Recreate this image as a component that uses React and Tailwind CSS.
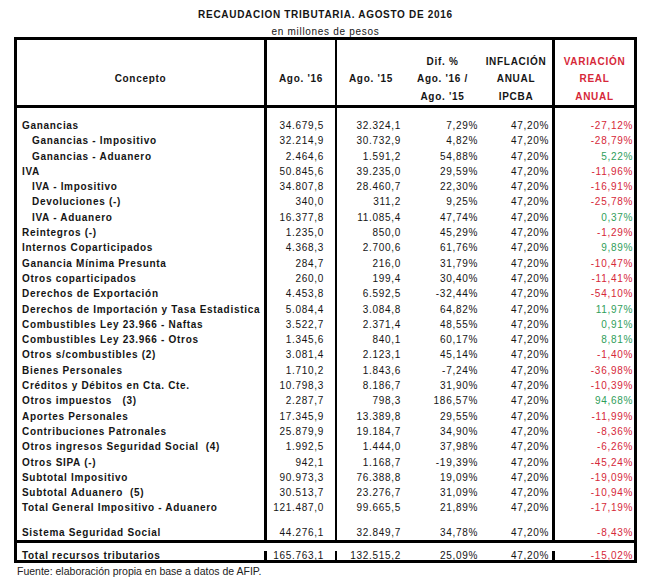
const gridCl = 'grid grid-cols-[250px_70px_68px_75px_75px_79px]';
const red = 'text-[#d62839]';
const green = 'text-[#2f9e5a]';

const rows = [
  { label: 'Ganancias', a: '34.679,5', b: '32.324,1', dif: '7,29%', real: '-27,12%' },
  { label: 'Ganancias - Impositivo', a: '32.214,9', b: '30.732,9', dif: '4,82%', real: '-28,79%', indent: true },
  { label: 'Ganancias - Aduanero', a: '2.464,6', b: '1.591,2', dif: '54,88%', real: '5,22%', indent: true },
  { label: 'IVA', a: '50.845,6', b: '39.235,0', dif: '29,59%', real: '-11,96%' },
  { label: 'IVA - Impositivo', a: '34.807,8', b: '28.460,7', dif: '22,30%', real: '-16,91%', indent: true },
  { label: 'Devoluciones (-)', a: '340,0', b: '311,2', dif: '9,25%', real: '-25,78%', indent: true },
  { label: 'IVA - Aduanero', a: '16.377,8', b: '11.085,4', dif: '47,74%', real: '0,37%', indent: true },
  { label: 'Reintegros (-)', a: '1.235,0', b: '850,0', dif: '45,29%', real: '-1,29%' },
  { label: 'Internos Coparticipados', a: '4.368,3', b: '2.700,6', dif: '61,76%', real: '9,89%' },
  { label: 'Ganancia Mínima Presunta', a: '284,7', b: '216,0', dif: '31,79%', real: '-10,47%' },
  { label: 'Otros coparticipados', a: '260,0', b: '199,4', dif: '30,40%', real: '-11,41%' },
  { label: 'Derechos de Exportación', a: '4.453,8', b: '6.592,5', dif: '-32,44%', real: '-54,10%' },
  { label: 'Derechos de Importación y Tasa Estadistica', a: '5.084,4', b: '3.084,8', dif: '64,82%', real: '11,97%' },
  { label: 'Combustibles Ley 23.966 - Naftas', a: '3.522,7', b: '2.371,4', dif: '48,55%', real: '0,91%' },
  { label: 'Combustibles Ley 23.966 - Otros', a: '1.345,6', b: '840,1', dif: '60,17%', real: '8,81%' },
  { label: 'Otros s/combustibles (2)', a: '3.081,4', b: '2.123,1', dif: '45,14%', real: '-1,40%' },
  { label: 'Bienes Personales', a: '1.710,2', b: '1.843,6', dif: '-7,24%', real: '-36,98%' },
  { label: 'Créditos y Débitos en Cta. Cte.', a: '10.798,3', b: '8.186,7', dif: '31,90%', real: '-10,39%' },
  { label: 'Otros impuestos   (3)', a: '2.287,7', b: '798,3', dif: '186,57%', real: '94,68%' },
  { label: 'Aportes Personales', a: '17.345,9', b: '13.389,8', dif: '29,55%', real: '-11,99%' },
  { label: 'Contribuciones Patronales', a: '25.879,9', b: '19.184,7', dif: '34,90%', real: '-8,36%' },
  { label: 'Otros ingresos Seguridad Social  (4)', a: '1.992,5', b: '1.444,0', dif: '37,98%', real: '-6,26%' },
  { label: 'Otros SIPA (-)', a: '942,1', b: '1.168,7', dif: '-19,39%', real: '-45,24%' },
  { label: 'Subtotal Impositivo', a: '90.973,3', b: '76.388,8', dif: '19,09%', real: '-19,09%' },
  { label: 'Subtotal Aduanero  (5)', a: '30.513,7', b: '23.276,7', dif: '31,09%', real: '-10,94%' },
  { label: 'Total General Impositivo - Aduanero', a: '121.487,0', b: '99.665,5', dif: '21,89%', real: '-17,19%' },
  { label: 'Sistema Seguridad Social', a: '44.276,1', b: '32.849,7', dif: '34,78%', real: '-8,43%', top: true },
];

function Row({ label, a, b, dif, real, indent, top, first, h = 'leading-[15.3px]' }) {
  const pad = first ? 'pt-[10px]' : top ? 'pt-[9px]' : '';
  const tone = real.startsWith('-') ? red : green;
  return (
    <div className={`${gridCl} ${h}`}>
      <div className={`${pad} border-r-[3px] border-black font-bold whitespace-pre overflow-hidden ${indent ? 'pl-[15px]' : 'pl-[5px]'}`}>
        {label}
      </div>
      <div className={`${pad} border-r-2 border-black text-right pr-[11px]`}>{a}</div>
      <div className={`${pad} text-right pr-[4px]`}>{b}</div>
      <div className={`${pad} text-right pr-[2px]`}>{dif}</div>
      <div className={`${pad} border-r-[3px] border-black text-right pr-[3px]`}>47,20%</div>
      <div className={`${pad} text-right pr-[1px] ${tone}`}>{real}</div>
    </div>
  );
}

export default function App() {
  return (
    <div className="w-[654px] h-[578px] overflow-hidden bg-white text-[#151515] text-[10px] tracking-[0.7px] font-['Liberation_Sans',Arial,sans-serif]">
      <div className="ml-[14px] w-[623px]">
        {/* titles */}
        <p className="mt-[8px] leading-[14px] text-center font-bold">RECAUDACION TRIBUTARIA. AGOSTO DE 2016</p>
        <p className="mt-[5px] leading-[10px] text-center">en millones de pesos</p>

        <div className="border-[3px] border-black">
          {/* header */}
          <div className={`${gridCl} h-[68px] border-b-[3px] border-black font-bold leading-[17.5px] text-center`}>
            <div className="border-r-[3px] border-black flex flex-col justify-end pb-[17.5px]">Concepto</div>
            <div className="border-r-2 border-black flex flex-col justify-end pb-[17.5px]">Ago. '16</div>
            <div className="flex flex-col justify-end pb-[17.5px]">Ago. '15</div>
            <div className="flex flex-col justify-end">
              <span>Dif. %</span>
              <span>Ago. '16 /</span>
              <span>Ago. '15</span>
            </div>
            <div className="border-r-[3px] border-black flex flex-col justify-end">
              <span>INFLACIÓN</span>
              <span>ANUAL</span>
              <span>IPCBA</span>
            </div>
            <div className={`flex flex-col justify-end ${red}`}>
              <span>VARIACIÓN</span>
              <span>REAL</span>
              <span>ANUAL</span>
            </div>
          </div>

          {/* body */}
          {rows.map((r, i) => (
            <Row key={r.label} {...r} first={i === 0} />
          ))}

          {/* total */}
          <div className="border-t-[3px] border-black">
            <Row
              label="Total recursos tributarios"
              a="165.763,1"
              b="132.515,2"
              dif="25,09%"
              real="-15,02%"
              h="leading-[10px] h-[17px] pt-[8px]"
            />
          </div>
        </div>
      </div>

      <p className="mt-[1px] ml-[17px] leading-[14px] text-[10.5px] tracking-normal text-[#222]">
        Fuente: elaboración propia en base a datos de AFIP.
      </p>
    </div>
  );
}
